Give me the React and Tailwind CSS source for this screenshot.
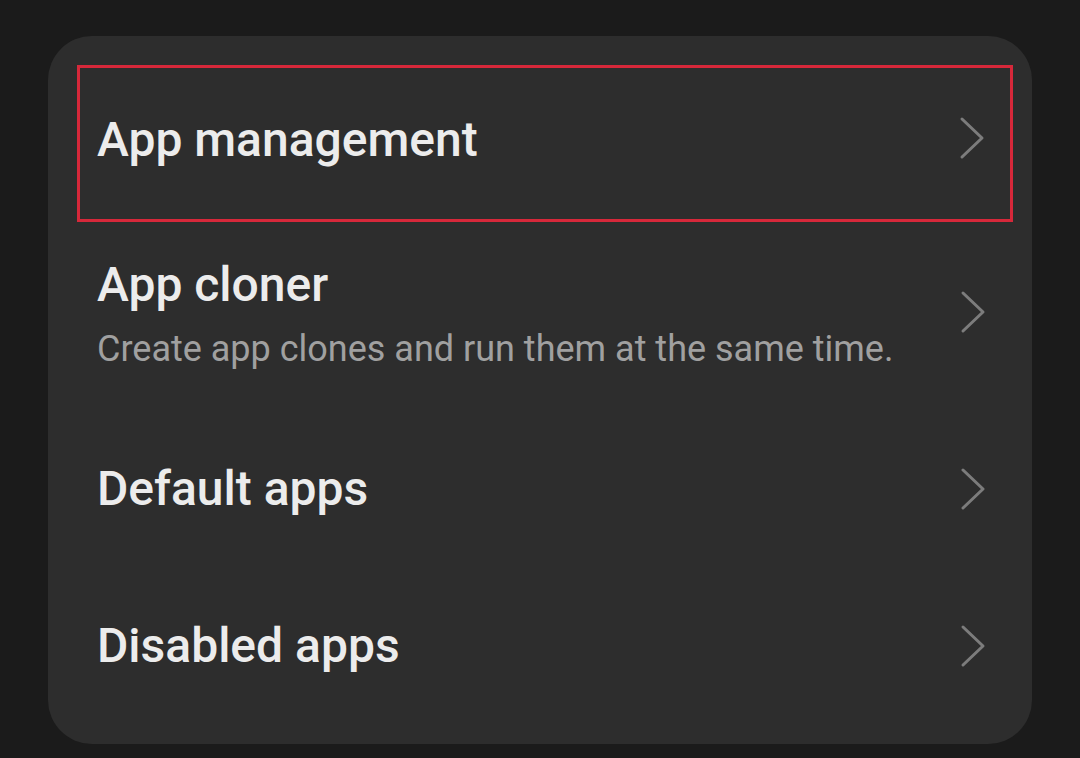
import React from 'react'

const Chevron = ({ className = '' }) => (
  <svg width="26" height="44" viewBox="0 0 26 44" fill="none" className={`shrink-0 ${className}`}>
    <polyline points="3,3 23,22 3,41" stroke="#7c7c7c" strokeWidth="3" strokeLinecap="round" strokeLinejoin="round" />
  </svg>
)

const Row = ({ title, subtitle, className = '', titleClass = '', chevronClass = '' }) => (
  <div className={`flex items-center justify-between ${className}`}>
    <div className="flex flex-col">
      <span className={`text-[48px] leading-none font-medium text-[#ececec] ${titleClass}`}>{title}</span>
      {subtitle && (
        <span className="mt-[22px] text-[36px] leading-none text-[#a0a0a0]">{subtitle}</span>
      )}
    </div>
    <Chevron className={chevronClass} />
  </div>
)

export default function App() {
  return (
    <div className="w-[1080px] h-[758px] bg-[#1b1b1b] pt-[36px] pl-[48px] overflow-hidden" style={{ fontFamily: 'Roboto, "Noto Sans", sans-serif' }}>
      <div className="w-[984px] h-[708px] rounded-[44px] bg-[#2d2d2d] pt-[29px]">
        <div className="ml-[29px] w-[936px] h-[157px] border-[3px] border-[#d6283a] pl-[17px] pr-[25px] flex items-center">
          <Row title="App management" className="w-full" titleClass="-mt-[8px]" chevronClass="-mt-[12px]" />
        </div>
        <Row
          title="App cloner"
          subtitle="Create app clones and run them at the same time."
          className="h-[188px] pl-[49px] pr-[46px]"
          titleClass="-mt-[4px]"
          chevronClass="-mt-[8px]"
        />
        <Row title="Default apps" className="h-[157px] pl-[49px] pr-[46px]" />
        <Row title="Disabled apps" className="h-[157px] pl-[49px] pr-[46px]" />
      </div>
    </div>
  )
}
